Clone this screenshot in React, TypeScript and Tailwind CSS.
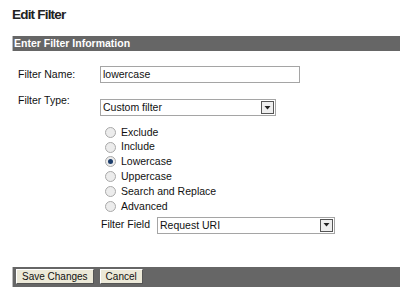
import React from "react";

const font = { fontFamily: '"Liberation Sans", Arial, sans-serif' };

function Radio({ checked, label }: { checked?: boolean; label: string }) {
  return (
    <div className="flex items-center h-[14.8px]">
      <span className="w-[11px] h-[11px] rounded-full border border-[#a9a9a9] bg-[#ececec] flex items-center justify-center ml-[5px]">
        {checked && <span className="w-[5px] h-[5px] rounded-full bg-[#1c3d6b]" />}
      </span>
      <span className="ml-[5px] text-[10.5px] text-[#111]">{label}</span>
    </div>
  );
}

function Select({ value, width }: { value: string; width: string }) {
  return (
    <div className={`h-[17px] border border-[#a5a5a5] bg-white flex items-center justify-between ${width}`}>
      <span className="pl-[2px] text-[10.5px] text-[#111] leading-none">{value}</span>
      <span className="w-[13px] h-[13px] mr-[1px] border border-[#555] bg-[#eeeeee] flex items-center justify-center">
        <svg width="7" height="4" viewBox="0 0 7 4"><polygon points="0.5,0 6.5,0 3.5,3.5" fill="#222" /></svg>
      </span>
    </div>
  );
}

export default function App() {
  return (
    <div className="w-[400px] h-[293px] bg-white relative overflow-hidden" style={font}>
      <div className="pl-[12px] pt-[7px]">
        <div className="text-[13.5px] font-bold text-[#222] leading-[16px] tracking-[-0.8px]">Edit Filter</div>
        <div className="mt-[13px] h-[15px] bg-[#666666] border-l border-[#bbbbbb] flex items-center pl-[1px]">
          <span className="text-[10.5px] font-bold text-white leading-none">Enter Filter Information</span>
        </div>
        <div className="flex items-center mt-[15px]">
          <span className="w-[88px] pl-[6px] text-[10.5px] text-[#111]">Filter Name:</span>
          <div className="w-[200px] h-[17px] border border-[#a5a5a5] flex items-center pl-[2px] text-[10.5px] text-[#111]">lowercase</div>
        </div>
        <div className="flex mt-[16px]">
          <span className="w-[88px] pl-[6px] text-[10.5px] text-[#111] leading-[13px] -mt-[5px]">Filter Type:</span>
          <div className="flex flex-col">
            <Select value="Custom filter" width="w-[176px]" />
            <div className="flex flex-col mt-[9px]">
              <Radio label="Exclude" />
              <Radio label="Include" />
              <Radio checked label="Lowercase" />
              <Radio label="Uppercase" />
              <Radio label="Search and Replace" />
              <Radio label="Advanced" />
            </div>
            <div className="flex items-center mt-[3px]">
              <span className="w-[57px] pl-[1px] text-[10.5px] text-[#111]">Filter Field</span>
              <Select value="Request URI" width="w-[178px]" />
            </div>
          </div>
        </div>
        <div className="mt-[33px] h-[20px] bg-[#666666] border-l border-[#bbbbbb] flex items-center pl-[3px] gap-[6px]">
          <button className="h-[15px] px-[5px] bg-[#ece9d8] border border-[#fff] border-r-[#555] border-b-[#555] text-[10px] text-[#111] leading-none">Save Changes</button>
          <button className="h-[15px] px-[5px] bg-[#ece9d8] border border-[#fff] border-r-[#555] border-b-[#555] text-[10px] text-[#111] leading-none">Cancel</button>
        </div>
      </div>
    </div>
  );
}
